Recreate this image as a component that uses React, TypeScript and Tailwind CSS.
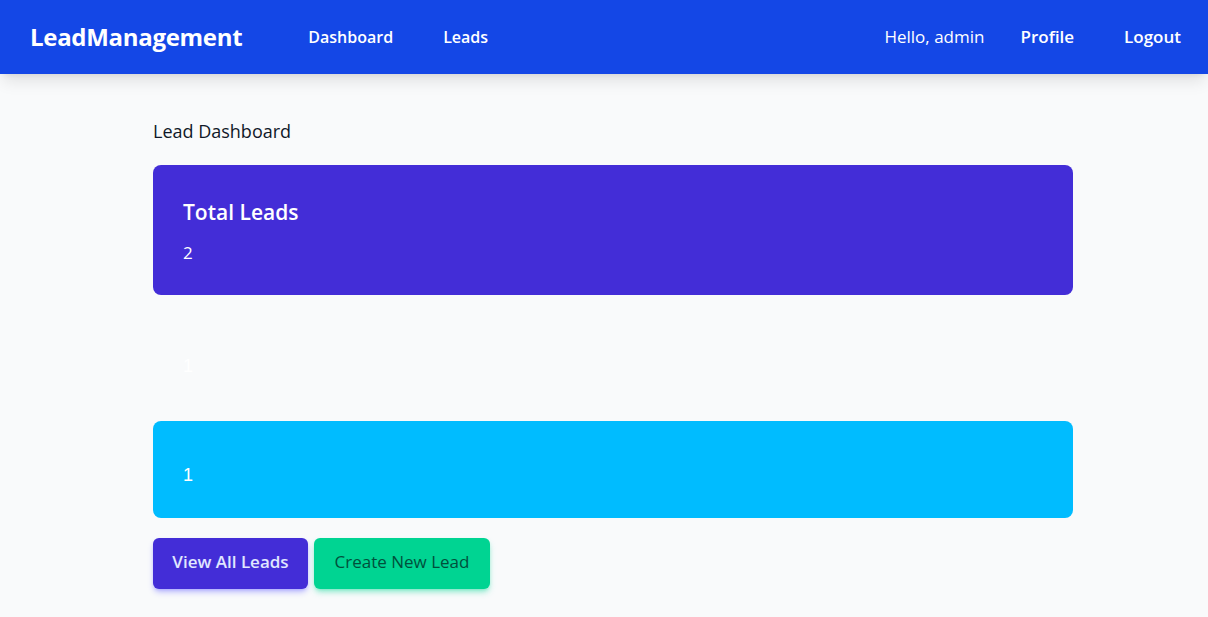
const font = { fontFamily: '"Open Sans", "Noto Sans", sans-serif' };
const arial = { fontFamily: '"Liberation Sans", Arial, sans-serif' };

function Navbar() {
  return (
    <nav className="flex h-[74px] items-center bg-blue-700 pl-[30px] pr-[27px] text-white shadow-lg">
      <span className="text-[24px] font-bold tracking-[-0.3px]">LeadManagement</span>
      <div className="ml-[66px] flex items-center gap-[50px] text-[16px] font-semibold">
        <a>Dashboard</a>
        <a>Leads</a>
      </div>
      <div className="ml-auto flex items-center text-[17px]">
        <span>Hello, admin</span>
        <a className="ml-[36px] font-semibold">Profile</a>
        <a className="ml-[50px] font-semibold">Logout</a>
      </div>
    </nav>
  );
}

export default function App() {
  return (
    <div className="min-h-[617px] bg-gray-50" style={font}>
      <Navbar />
      <main className="ml-[153px] w-[920px] pt-[44px]">
        <h1 className="text-[18px] text-gray-900">Lead Dashboard</h1>

        <div className="mt-[20px] h-[130px] rounded-lg bg-indigo-700 px-[30px] pt-[32px] text-white">
          <h3 className="text-[21px] font-semibold">Total Leads</h3>
          <p className="mt-[11px] text-[17px]">2</p>
        </div>

        {/* this card's colour never made it */}
        <div className="mt-[16px] h-[94px] rounded-lg px-[30px] pt-[43px] text-white">
          <p className="text-[18px] leading-6" style={arial}>1</p>
        </div>

        <div className="mt-[16px] h-[97px] rounded-lg bg-sky-400 px-[30px] pt-[42px] text-white">
          <p className="text-[18px] leading-6" style={arial}>1</p>
        </div>

        <div className="mt-[20px] flex gap-[6px]">
          <button className="h-[51px] w-[155px] rounded-md bg-indigo-700 pb-[3px] text-[17px] font-semibold text-indigo-100 shadow-md shadow-indigo-500/40">
            View All Leads
          </button>
          <button className="h-[51px] w-[176px] rounded-md bg-emerald-400 pb-[3px] text-[17px] text-emerald-900 shadow-md shadow-emerald-400/40">
            Create New Lead
          </button>
        </div>
      </main>
    </div>
  );
}
